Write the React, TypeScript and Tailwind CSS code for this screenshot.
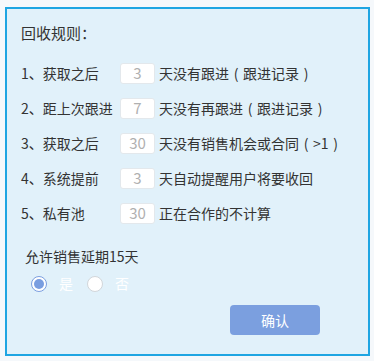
import { useState } from "react";

const rules = [
  { label: "1、获取之后", value: "3", text: "天没有跟进（跟进记录）" },
  { label: "2、距上次跟进", value: "7", text: "天没有再跟进（跟进记录）" },
  { label: "3、获取之后", value: "30", text: "天没有销售机会或合同（>1）" },
  { label: "4、系统提前", value: "3", text: "天自动提醒用户将要收回" },
  { label: "5、私有池", value: "30", text: "正在合作的不计算" },
];

// full-width brackets drawn centred in their box, as the original font does
function RuleText({ text }: { text: string }) {
  const parts = text.split(/([（）])/).filter(Boolean);
  return (
    <span className="ml-[4px] whitespace-nowrap">
      {parts.map((p, i) =>
        p === "（" || p === "）" ? (
          <span key={i} className="inline-block w-[14px] text-center">
            {p === "（" ? "(" : ")"}
          </span>
        ) : (
          <span key={i}>{p}</span>
        )
      )}
    </span>
  );
}

function Radio({ checked, label, onClick }: { checked: boolean; label: string; onClick: () => void }) {
  return (
    <button type="button" onClick={onClick} className="flex items-center">
      <span
        className={
          checked
            ? "flex h-4 w-4 items-center justify-center rounded-full border border-[#7c9fe0] bg-white"
            : "h-4 w-4 rounded-full border border-[#d2d6da] bg-white"
        }
      >
        {checked ? <span className="h-[10px] w-[10px] rounded-full bg-[#7a9ee0]" /> : null}
      </span>
      <span className="ml-3 text-[14px] text-white">{label}</span>
    </button>
  );
}

export default function App() {
  const [allow, setAllow] = useState(true);

  return (
    <div
      className="h-[361px] w-[374px] bg-[#f5f8fb] pl-[5px] pt-[7px]"
      style={{ fontFamily: '"Noto Sans CJK SC", "Noto Sans", sans-serif' }}
    >
      <div className="flex h-[349px] w-[365px] flex-col border-2 border-[#1fa5e2] bg-[#e1f1fa] pl-[14px] text-[#333]">
        <h2 className="mt-[14px] text-[15px] leading-5">回收规则：</h2>

        <div className="mt-[20px] flex flex-col gap-[14px]">
          {rules.map((r) => (
            <div key={r.label} className="flex h-[21px] items-center text-[14px]">
              <span className="w-[99px] shrink-0 whitespace-nowrap">{r.label}</span>
              <input
                readOnly
                value={r.value}
                className="h-[21px] w-[35px] rounded-[3px] border border-[#e3e8ec] bg-white text-center text-[15px] text-[#b0b0b0] outline-none"
              />
              <RuleText text={r.text} />
            </div>
          ))}
        </div>

        <p className="ml-[4px] mt-[22px] text-[14px] leading-5">允许销售延期15天</p>

        <div className="ml-[10px] mt-[7px] flex items-center gap-[14px]">
          <Radio checked={allow} label="是" onClick={() => setAllow(true)} />
          <Radio checked={!allow} label="否" onClick={() => setAllow(false)} />
        </div>

        <div className="mr-[48px] mt-[11px] flex justify-end">
          <button
            type="button"
            className="h-[30px] w-[90px] rounded-[4px] bg-[#7b9fdf] text-[14px] text-white"
          >
            确认
          </button>
        </div>
      </div>
    </div>
  );
}
